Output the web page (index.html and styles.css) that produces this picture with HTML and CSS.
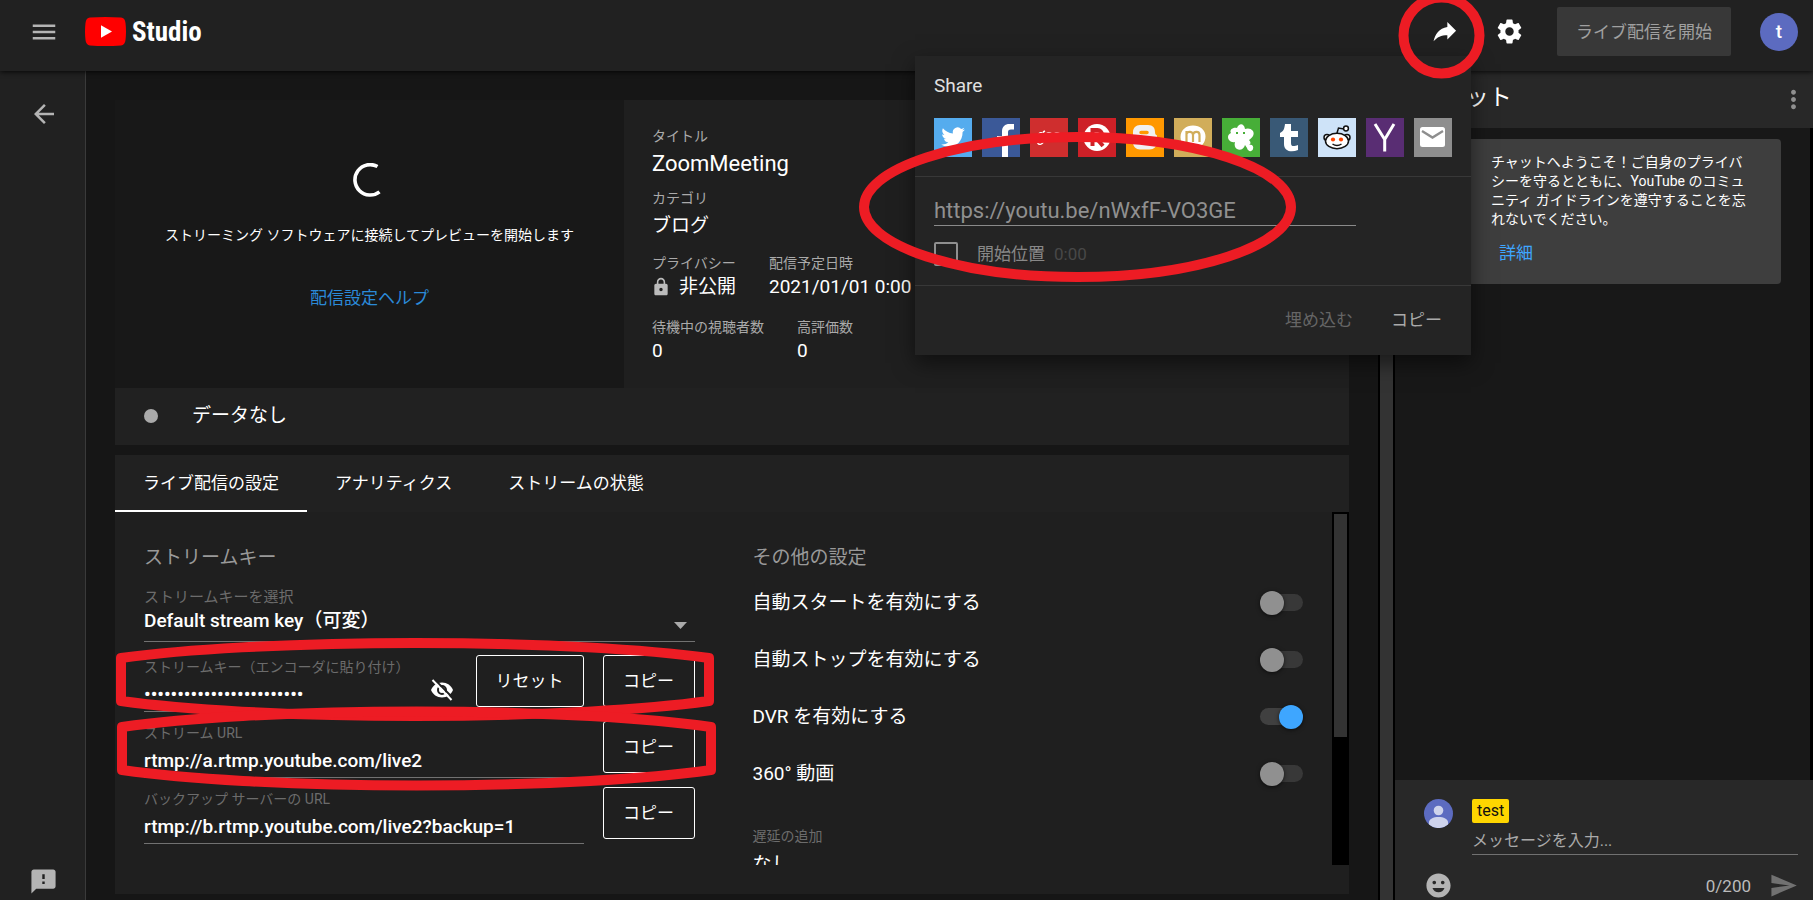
FILE: index.html
```html
<!DOCTYPE html>
<html lang="ja">
<head>
<meta charset="utf-8">
<meta name="viewport" content="width=device-width, initial-scale=1">
<title>YouTube Studio</title>
<link rel="stylesheet" href="styles.css">
</head>
<body>
<header class="topbar">
  <button class="icon-btn menu-btn" aria-label="メニュー"><svg viewBox="0 0 24 24" width="30" height="30"><path d="M3 18h18v-2H3v2zm0-5h18v-2H3v2zm0-7v2h18V6H3z"/></svg></button>
  <a class="logo" href="#">
    <svg viewBox="0 0 41 29" width="41" height="29"><path fill="#f00" d="M5 .6Q20 -.6 36 .6Q40 1 40.500 6Q41.500 14.500 40.500 23Q40 28 36 28.400Q20 29.600 5 28.400Q1 28 .500 23Q-.500 14.500 .500 6Q1 1 5 .6Z"/><path fill="#fff" d="M16 8.300L27 14.500L16 20.700Z"/></svg>
    <span class="logo-text">Studio</span>
  </a>
  <div class="top-actions">
    <button class="icon-btn white share-btn" aria-label="共有"><svg viewBox="0 0 24 24" width="28" height="28"><path d="M21.500 11L14 3.500v4.300C7 8.800 3.500 14 2.200 20C5.200 16.300 8.800 14.700 14 14.700V18.500z"/></svg></button>
    <button class="icon-btn white gear-btn" aria-label="設定"><svg viewBox="0 0 24 24" width="29" height="29"><path d="M19.430 12.980c.04-.32.07-.64.07-.98s-.03-.66-.07-.98l2.110-1.650c.19-.15.24-.42.12-.64l-2-3.460c-.12-.22-.39-.3-.61-.22l-2.490 1c-.52-.4-1.080-.73-1.690-.98l-.38-2.650C14.460 2.180 14.250 2 14 2h-4c-.25 0-.46.18-.49.42l-.38 2.650c-.61.25-1.170.59-1.690.98l-2.490-1c-.23-.09-.49 0-.61.22l-2 3.460c-.13.22-.07.49.12.64l2.110 1.650c-.04.32-.07.65-.07.98s.03.66.07.98l-2.110 1.650c-.19.15-.24.42-.12.64l2 3.460c.12.22.39.3.61.22l2.490-1c.52.4 1.080.73 1.690.98l.38 2.650c.03.24.24.42.49.42h4c.25 0 .46-.18.49-.42l.38-2.650c.61-.25 1.170-.59 1.690-.98l2.490 1c.23.09.49 0 .61-.22l2-3.460c.12-.22.07-.49-.12-.64l-2.110-1.650zM12 15.500c-1.930 0-3.500-1.570-3.500-3.500s1.570-3.500 3.500-3.500 3.500 1.570 3.500 3.500-1.570 3.500-3.500 3.500z"/></svg></button>
    <button class="go-live">ライブ配信を開始</button>
    <button class="account">t</button>
  </div>
</header>

<section class="share" aria-label="Share">
  <h2 class="share-title">Share</h2>
  <div class="share-icons">
    <a href="#" aria-label="Twitter"><svg viewBox="0 0 38 39"><rect width="38" height="39" fill="#55acee"/><path fill="#fff" d="M31 11.500c-.9.400-1.800.7-2.800.8 1-.6 1.700-1.500 2.100-2.600-.9.500-2 1-3.100 1.200A4.900 4.900 0 0 0 18.900 15.400c-4-.2-7.600-2.100-10-5.100-1.300 2.200-.6 5 1.500 6.500-.8 0-1.500-.2-2.200-.6 0 2.300 1.600 4.300 3.900 4.800-.7.200-1.500.2-2.200.1.600 1.900 2.400 3.300 4.500 3.400A9.800 9.800 0 0 1 7.200 26.500c8.800 5.400 21.600.5 21.400-12.500 1-.7 1.800-1.600 2.400-2.500z"/></svg></a>
    <a href="#" aria-label="Facebook"><svg viewBox="0 0 38 39"><rect width="38" height="39" fill="#3b5998"/><path fill="#fff" d="M20 39V24h-5v-6h5v-4.500C20 8.500 23 6 27.500 6H32v5.500h-3c-2.300 0-3 1-3 3V18h5.700l-.8 6H26v15z"/></svg></a>
    <a href="#" aria-label="goo"><svg viewBox="0 0 38 39"><rect width="38" height="39" fill="#cf2e2e"/><g fill="none" stroke="#fff" stroke-width="1.400"><ellipse cx="11" cy="17.500" rx="2.400" ry="2.800"/><path d="M13.500 14.500v7c0 6-6 6-6 2.500M13 14l2-1"/><ellipse cx="19" cy="17" rx="2.600" ry="2.400"/><ellipse cx="27" cy="17" rx="2.600" ry="2.400"/></g></svg></a>
    <a href="#" aria-label="Rakuten"><svg viewBox="0 0 38 39"><rect width="38" height="39" fill="#cd2027"/><circle cx="19" cy="19.500" r="13.500" fill="#fff"/><path fill="none" stroke="#cd2027" stroke-width="4" d="M14.500 28V12h5a4.500 4.500 0 0 1 0 9h-4M19 21l6 7"/></svg></a>
    <a href="#" aria-label="Blogger"><svg viewBox="0 0 38 39"><rect width="38" height="39" fill="#ff9800"/><path fill="#f1f1f1" d="M14 7h8c5 0 7 3 7 7 0 2.500 1 3 2 3.500v6c0 5-3 8-7.500 8H14c-4 0-7-3-7-7V14c0-4 3-7 7-7z"/><path stroke="#ff9800" stroke-width="3.500" stroke-linecap="round" d="M15 14.500h6M15 24.500h9"/></svg></a>
    <a href="#" aria-label="mixi"><svg viewBox="0 0 38 39"><rect width="38" height="39" fill="#d1ad5a"/><path fill="#fff" d="M19 7.500c7 0 12.500 4.500 12.500 11S27 30 20 30v3C12 31 6.500 26 6.500 19S12 7.500 19 7.500z"/><path fill="none" stroke="#d1ad5a" stroke-width="2.200" d="M12.500 24V13M12.500 16c1-3 6.500-3 6.500 1v7M19 16.500c1-3.500 6.500-3.500 6.500.5v7"/></svg></a>
    <a href="#" aria-label="Ameba"><svg viewBox="0 0 38 39"><rect width="38" height="39" fill="#47ae38"/><path fill="#fff" d="M15 10c2-5 7-5 8 1 2-1 6-1 8 2 2 4-1 7-4 9 2 2 2 4 0 5 3-1 5 1 4 4s-5 3-6-1l-2-3c-1 4-5 6-8 4-2-1-3-4-2-7-4 1-7-2-7-5 0-2 1-3 3-4-2-3 2-6 6-5z"/><path fill="#47ae38" d="M14 14h2v2h-2zM21 14h2v2h-2z"/></svg></a>
    <a href="#" aria-label="Tumblr"><svg viewBox="0 0 38 39"><rect width="38" height="39" fill="#395976"/><path fill="#fff" d="M15 6h6v7h7v6h-7v6c0 4 3 3.500 7 2v5c-7 3-14 1-14-6v-7h-4v-4c3.500-1.500 4.500-4.500 5-9z"/></svg></a>
    <a href="#" aria-label="reddit"><svg viewBox="0 0 38 39"><rect width="38" height="39" fill="#cee3f8"/><g fill="#fff" stroke="#111" stroke-width="1.500"><circle cx="9" cy="19.500" r="3"/><circle cx="29" cy="19.500" r="3"/><ellipse cx="19" cy="23" rx="11.500" ry="7.700"/><path fill="none" d="M19 15l1.500-5 5.500 1M14.500 26q4.500 3 9 0"/><circle cx="28" cy="10.500" r="2.400"/></g><g fill="#ff4500"><circle cx="15" cy="21.500" r="2.100"/><circle cx="23" cy="21.500" r="2.100"/></g></svg></a>
    <a href="#" aria-label="Yahoo"><svg viewBox="0 0 38 39"><rect width="38" height="39" fill="#592d73"/><path fill="none" stroke="#fff" stroke-width="3" d="M9 6l9.700 15.500L28 6M18.700 21v12.500"/></svg></a>
    <a href="#" aria-label="メール"><svg viewBox="0 0 38 39"><rect width="38" height="39" fill="#8e8e8e"/><rect x="6" y="9" width="25" height="20" rx="2.500" fill="#fff"/><path fill="none" stroke="#8e8e8e" stroke-width="2.400" d="M8 13l10.500 6.500L29 13"/></svg></a>
  </div>
  <div class="share-body">
    <input class="share-url" type="text" aria-label="URL" value="https://youtu.be/nWxfF-VO3GE" readonly>
    <div class="start-row"><input type="checkbox" id="start" class="check"><label for="start">開始位置</label><span class="start-time">0:00</span></div>
  </div>
  <div class="share-foot"><button class="flat dim">埋め込む</button><button class="flat">コピー</button></div>
</section>

<div class="layout">
  <nav class="rail">
    <button class="icon-btn" aria-label="戻る"><svg viewBox="0 0 24 24" width="30" height="30"><path d="M20 11H7.830l5.590-5.590L12 4l-8 8 8 8 1.410-1.410L7.830 13H20v-2z"/></svg></button>
    <button class="icon-btn" aria-label="フィードバック"><svg viewBox="0 0 24 24" width="29" height="29"><path d="M20 2H4c-1.100 0-1.990.9-1.990 2L2 22l4-4h14c1.100 0 2-.9 2-2V4c0-1.100-.9-2-2-2zm-7 12h-2v-2h2v2zm0-4h-2V6h2v4z"/></svg></button>
  </nav>

  <main class="main">
    <section class="overview">
      <div class="preview">
        <svg class="spinner" viewBox="0 0 34 34" width="34" height="34"><path fill="none" stroke="#fff" stroke-width="3.600" d="M24.500 3.500A15.200 15.200 0 1 0 26.500 28.800"/></svg>
        <p class="preview-text">ストリーミング ソフトウェアに接続してプレビューを開始します</p>
        <a class="link" href="#">配信設定ヘルプ</a>
      </div>
      <dl class="info">
        <div class="item title"><dt>タイトル</dt><dd>ZoomMeeting</dd></div>
        <div class="item category"><dt>カテゴリ</dt><dd>ブログ</dd></div>
        <div class="pair">
          <div class="item"><dt>プライバシー</dt><dd class="private"><svg viewBox="2 0 20 24" width="18" height="20"><path fill="#bbb" d="M18 8h-1V6c0-2.760-2.240-5-5-5S7 3.240 7 6v2H6c-1.100 0-2 .9-2 2v10c0 1.100.9 2 2 2h12c1.100 0 2-.9 2-2V10c0-1.100-.9-2-2-2zm-6 9c-1.100 0-2-.9-2-2s.9-2 2-2 2 .9 2 2-.9 2-2 2zm3.100-9H8.900V6c0-1.710 1.390-3.100 3.100-3.100s3.100 1.390 3.100 3.100v2z"/></svg>非公開</dd></div>
          <div class="item"><dt>配信予定日時</dt><dd>2021/01/01 0:00</dd></div>
        </div>
        <div class="pair">
          <div class="item"><dt>待機中の視聴者数</dt><dd>0</dd></div>
          <div class="item"><dt>高評価数</dt><dd>0</dd></div>
        </div>
      </dl>
    </section>
    <div class="status"><span class="dot"></span>データなし</div>

    <section class="panel">
      <div class="tabs" role="tablist">
        <button role="tab" class="tab active" aria-selected="true">ライブ配信の設定</button>
        <button role="tab" class="tab">アナリティクス</button>
        <button role="tab" class="tab">ストリームの状態</button>
      </div>
      <div class="scroll">
        <div class="columns">
          <form class="stream">
            <h3>ストリームキー</h3>
            <div class="select-field">
              <label for="key-select">ストリームキーを選択</label>
              <div class="select-line">
                <select id="key-select"><option>Default stream key（可変）</option></select>
                <svg viewBox="0 0 13 7" width="13" height="7"><path fill="#aaa" d="M0 0h13L6.500 7z"/></svg>
              </div>
            </div>
            <div class="row">
              <div class="field key-field">
                <div class="field-text">
                  <label for="key">ストリームキー（エンコーダに貼り付け）</label>
                  <input id="key" type="password" value="abcd-efgh-ijkl-mnop-qrst" readonly>
                </div>
                <button type="button" class="icon-btn white eye" aria-label="表示"><svg viewBox="0 0 24 24" width="24" height="24"><path d="M12 4.500C7 4.500 2.700 7.600 1 12c1.700 4.400 6 7.500 11 7.500s9.300-3.100 11-7.500C21.300 7.600 17 4.500 12 4.500z"/><circle cx="12" cy="12" r="4" fill="#fff" stroke="#1f1f1f" stroke-width="2"/><path fill="none" stroke="#1f1f1f" stroke-width="2" d="M4.500 1.500L23 20"/><path fill="none" stroke="#fff" stroke-width="2" d="M2.500 2L21.500 22"/></svg></button>
                <button type="button" class="outline reset">リセット</button>
              </div>
              <button type="button" class="outline">コピー</button>
            </div>
            <div class="row">
              <div class="field"><label for="url">ストリーム URL</label><input id="url" type="text" value="rtmp://a.rtmp.youtube.com/live2" readonly></div>
              <button type="button" class="outline">コピー</button>
            </div>
            <div class="row">
              <div class="field"><label for="backup">バックアップ サーバーの URL</label><input id="backup" type="text" value="rtmp://b.rtmp.youtube.com/live2?backup=1" readonly></div>
              <button type="button" class="outline">コピー</button>
            </div>
          </form>
          <div class="other">
            <h3>その他の設定</h3>
            <label class="switch">自動スタートを有効にする<input type="checkbox"></label>
            <label class="switch">自動ストップを有効にする<input type="checkbox"></label>
            <label class="switch">DVR を有効にする<input type="checkbox" checked></label>
            <label class="switch">360° 動画<input type="checkbox"></label>
            <div class="delay"><label for="delay">遅延の追加</label><select id="delay"><option>なし</option></select></div>
          </div>
        </div>
        <div class="bar"><div class="thumb"></div></div>
      </div>
    </section>
  </main>

  <div class="page-bar"></div>

  <aside class="chat">
    <div class="chat-head"><h2>チャット</h2><button class="icon-btn dots" aria-label="その他"><svg viewBox="0 0 24 24" width="29" height="29"><path d="M12 8c1.100 0 2-.9 2-2s-.9-2-2-2-2 .9-2 2 .9 2 2 2zm0 2c-1.100 0-2 .9-2 2s.9 2 2 2 2-.9 2-2-.9-2-2-2zm0 6c-1.100 0-2 .9-2 2s.9 2 2 2 2-.9 2-2-.9-2-2-2z"/></svg></button></div>
    <div class="chat-body">
      <div class="welcome"><p>チャットへようこそ！ご自身のプライバシーを守るとともに、YouTube のコミュニティ ガイドラインを遵守することを忘れないでください。</p><a class="link" href="#">詳細</a></div>
    </div>
    <div class="chat-foot">
      <svg class="user" viewBox="0 0 29 29" width="29" height="29"><circle cx="14.500" cy="14.500" r="14.500" fill="#5c6bc0"/><circle cx="14.500" cy="11.500" r="4.800" fill="#ced3ec"/><path fill="#ced3ec" d="M5 25.500C4 20 9 18 14.500 18S25 20 24 25.500A14.500 14.500 0 0 1 5 25.500z"/></svg>
      <div class="compose"><span class="badge">test</span><input type="text" aria-label="メッセージ" placeholder="メッセージを入力..."></div>
      <button class="icon-btn emoji" aria-label="絵文字"><svg viewBox="0 0 24 24" width="29" height="29"><path d="M11.990 2C6.470 2 2 6.480 2 12s4.470 10 9.990 10C17.520 22 22 17.520 22 12S17.520 2 11.990 2zM15.500 8c.83 0 1.500.67 1.500 1.500s-.67 1.500-1.500 1.500-1.500-.67-1.500-1.500.67-1.500 1.500-1.500zm-7 0c.83 0 1.500.67 1.500 1.500S9.330 11 8.500 11 7 10.330 7 9.500 7.670 8 8.500 8zM7 14h10c-.8 2.300-2.700 3.500-5 3.500S7.800 16.300 7 14z"/></svg></button>
      <div class="send"><span>0/200</span><button class="icon-btn" aria-label="送信"><svg viewBox="0 0 24 24" width="29" height="29"><path d="M2 3l21 9L2 21v-7l15-2-15-2z"/></svg></button></div>
    </div>
  </aside>
</div>

<svg class="marks" viewBox="0 0 1813 900" width="1813" height="900" aria-hidden="true">
  <g fill="none" stroke="#ed1c24" stroke-width="10" stroke-linejoin="round">
    <circle cx="1441.500" cy="35.500" r="38"/>
    <ellipse cx="1077.500" cy="207" rx="213.500" ry="70"/>
    <path d="M121 658A367 37.500 0 0 1 709 658V701A367 37.500 0 0 1 121 701Z"/>
    <path d="M122 727A367 38.500 0 0 1 711 727V770A367 38.500 0 0 1 122 770Z"/>
  </g>
</svg>
</body>
</html>
```

FILE: styles.css
```css
* { box-sizing: border-box; }
html, body { margin: 0; height: 100%; }
body {
  display: flex;
  flex-direction: column;
  position: relative;
  overflow: hidden;
  background: #161616;
  color: #fff;
  font: 17px/24px Roboto, "Noto Sans CJK JP", sans-serif;
}
button, input, select { font: inherit; color: inherit; margin: 0; padding: 0; border: 0; background: none; border-radius: 0; outline: 0; appearance: none; }
h2, h3, p, dl, dd { margin: 0; font-weight: 400; }
svg { display: block; flex: none; }
.icon-btn { display: flex; justify-content: center; align-items: center; color: #b4b4b4; }
.icon-btn svg { fill: currentColor; }
.icon-btn.white { color: #fff; }
.link { color: #3ea6ff; text-decoration: none; }

/* top bar */
.topbar {
  position: relative;
  display: flex;
  align-items: center;
  flex: none;
  height: 71px;
  padding: 0 15px 8px 29px;
  background: #212121;
  box-shadow: 0 1px 5px rgba(0, 0, 0, .8);
  z-index: 2;
}
.logo { display: flex; align-items: center; gap: 6px; margin-left: 26px; color: #fff; text-decoration: none; }
.logo-text { font: 700 27px/36px "Liberation Sans Narrow", "Roboto Condensed", Roboto, sans-serif; }
.top-actions { display: flex; align-items: center; margin-left: auto; }
.gear-btn { margin-left: 36px; }
.go-live { width: 174px; height: 49px; margin-left: 33px; border-radius: 2px; background: #383838; color: #a0a0a0; }
.account { width: 38px; height: 38px; margin-left: 29px; border-radius: 50%; background: #5c6bc0; font-size: 19px; font-weight: 500; }

/* share popover */
.share {
  position: absolute;
  top: 56px;
  right: 342px;
  width: 556px;
  background: #242424;
  box-shadow: 0 8px 20px rgba(0, 0, 0, .5);
  z-index: 3;
}
.share-title { padding: 16px 19px 18px; font-size: 19px; line-height: 28px; color: #e0e0e0; }
.share-icons { display: flex; justify-content: space-between; padding: 0 19px 19px; border-bottom: 1px solid #383838; }
.share-icons svg { width: 38px; height: 39px; }
.share-body { height: 109px; padding: 18px 19px 0; border-bottom: 1px solid #383838; }
.share-url { width: 422px; height: 31px; border-bottom: 1px solid #8a8a8a; color: #909090; font-size: 22px; }
.start-row { display: flex; align-items: center; height: 24px; margin-top: 16px; color: #888; }
.check { width: 24px; height: 24px; margin-right: 19px; border: 2px solid #909090; border-radius: 2px; }
.start-time { margin-left: 9px; color: #484848; }
.share-foot { display: flex; justify-content: flex-end; gap: 38px; padding: 20px 29px 21px; }
.flat { height: 28px; color: #aaa; }
.flat.dim { color: #666; }

/* page frame */
.layout { display: flex; flex: 1; min-height: 0; }
.rail { display: flex; flex-direction: column; justify-content: space-between; align-items: flex-start; flex: none; width: 86px; padding: 28px 0 4px 29px; background: #212121; border-right: 1px solid #3a3a3a; }
.main { display: flex; flex-direction: column; flex: 1; min-width: 0; padding: 29px 29px 6px; }
.page-bar { flex: none; width: 17px; background: #333; border: solid #000; border-width: 0 2px; }

/* overview card */
.overview { display: grid; grid-template-columns: 509px 1fr; flex: none; height: 288px; }
.preview { display: flex; flex-direction: column; align-items: center; padding-top: 63px; background: #181818; }
.preview-text { margin-top: 26px; font-size: 14px; }
.preview .link { margin-top: 39px; color: #2b8ad8; }
.info { padding: 26px 28px; background: #1f1f1f; }
.item { margin-bottom: 16px; }
.item.title { margin-bottom: 10px; }
.item.category { margin-bottom: 13px; }
.item dt { font-size: 14px; line-height: 20px; color: #aaa; }
.item dd { font-size: 19px; line-height: 28px; white-space: nowrap; }
.item.title dd { margin-top: 4px; font-size: 22px; }
.item.category dd { margin-top: 4px; }
.pair { display: flex; gap: 33px; }
.private { display: flex; align-items: center; gap: 9px; }
.status { display: flex; align-items: center; gap: 34px; flex: none; height: 57px; padding: 0 29px 2px; background: #212121; font-size: 19px; }
.dot { width: 14px; height: 14px; border-radius: 50%; background: #aaa; }

/* settings panel */
.panel { display: flex; flex-direction: column; flex: 1; min-height: 0; margin-top: 10px; padding-bottom: 29px; background: #1f1f1f; }
.tabs { display: flex; flex: none; height: 57px; background: #212121; }
.tab { padding: 0 28px; border-bottom: 2px solid transparent; }
.tab.active { border-color: #fff; }
.scroll { display: flex; flex: 1; min-height: 0; overflow: hidden; }
.columns { display: grid; grid-template-columns: 1fr 1fr; align-items: start; gap: 58px; flex: 1; padding: 30px 29px 0; }
.columns h3 { font-size: 19px; line-height: 32px; color: #999; }
.columns label { display: block; color: #6c6c6c; font-size: 14px; line-height: 20px; white-space: nowrap; }
.bar { flex: none; width: 17px; padding: 2px; background: #000; }
.thumb { height: 64%; background: #333; }
.select-field { margin: 13px 0 13px; padding-bottom: 6px; border-bottom: 1px solid #717171; }
.columns .select-field label { font-size: 15px; }
select { display: block; width: 100%; height: 28px; font-size: 19px; }
.select-line { display: grid; align-items: center; font-weight: 500; }
.select-line > * { grid-area: 1 / 1; }
.select-line svg { justify-self: end; margin: 8px 8px 0 0; pointer-events: none; }
.row { display: grid; grid-template-columns: 1fr 92px; align-items: start; gap: 19px; margin-bottom: 9px; }
.field { height: 57px; padding-top: 2px; border-bottom: 1px solid #717171; }
.field input { display: block; width: 100%; height: 34px; font-size: 19px; font-weight: 500; }
.key-field { display: grid; grid-template-columns: 1fr 24px 108px; gap: 22px; padding: 0; }
.field-text { padding-top: 2px; min-width: 0; }
.eye { height: 24px; margin-top: 23px; }
.outline { height: 52px; border: 1px solid #fff; border-radius: 3px; }
.columns .switch { display: flex; justify-content: space-between; align-items: center; height: 57px; color: #fff; font-size: 19px; }
.switch input { display: flex; align-items: center; width: 43px; height: 17px; border-radius: 9px; background: #383838; }
.switch input::before { content: ""; width: 24px; height: 24px; border-radius: 50%; background: #909090; box-shadow: 0 1px 4px rgba(0, 0, 0, .6); }
.switch input:checked { justify-content: flex-end; background: #404040; }
.switch input:checked::before { background: #3ea6ff; }
.delay { margin-top: 24px; }
.delay select { margin-top: 5px; }

/* chat */
.chat { display: flex; flex-direction: column; flex: none; width: 418px; background: #181818; }
.chat-head { display: flex; justify-content: space-between; align-items: center; flex: none; height: 57px; padding: 0 5px 0 25px; background: #282828; }
.chat-head h2 { padding-bottom: 3px; font-size: 23px; }
.dots { color: #909090; }
.chat-body { flex: 1; padding: 11px 29px 0 24px; border-right: 3px solid #000; }
.welcome { padding: 14px 30px 17px 72px; border-radius: 4px; background: #3e3e3e; font-size: 14px; line-height: 19px; }
.welcome .link { display: block; margin: 10px 0 0 8px; font-size: 17px; line-height: 28px; }
.chat-foot { display: grid; grid-template-columns: 29px 1fr; column-gap: 19px; flex: none; height: 120px; padding: 19px 15px 0 29px; background: #282828; }
.compose { display: flex; flex-direction: column; align-items: flex-start; }
.badge { padding: 0 5px; border-radius: 2px; background: #ffd600; color: #111; font-size: 16px; }
.compose input { width: 100%; height: 32px; padding-top: 3px; border-bottom: 1px solid #717171; font-size: 16px; }
.compose input::placeholder { color: #aaa; opacity: 1; }
.emoji { height: 29px; margin-top: 16px; }
.send { display: flex; justify-content: flex-end; align-items: center; gap: 18px; height: 29px; margin-top: 16px; color: #bbb; }
.send .icon-btn { color: #717171; }

.marks { position: absolute; top: 0; left: 0; z-index: 5; pointer-events: none; }
```
